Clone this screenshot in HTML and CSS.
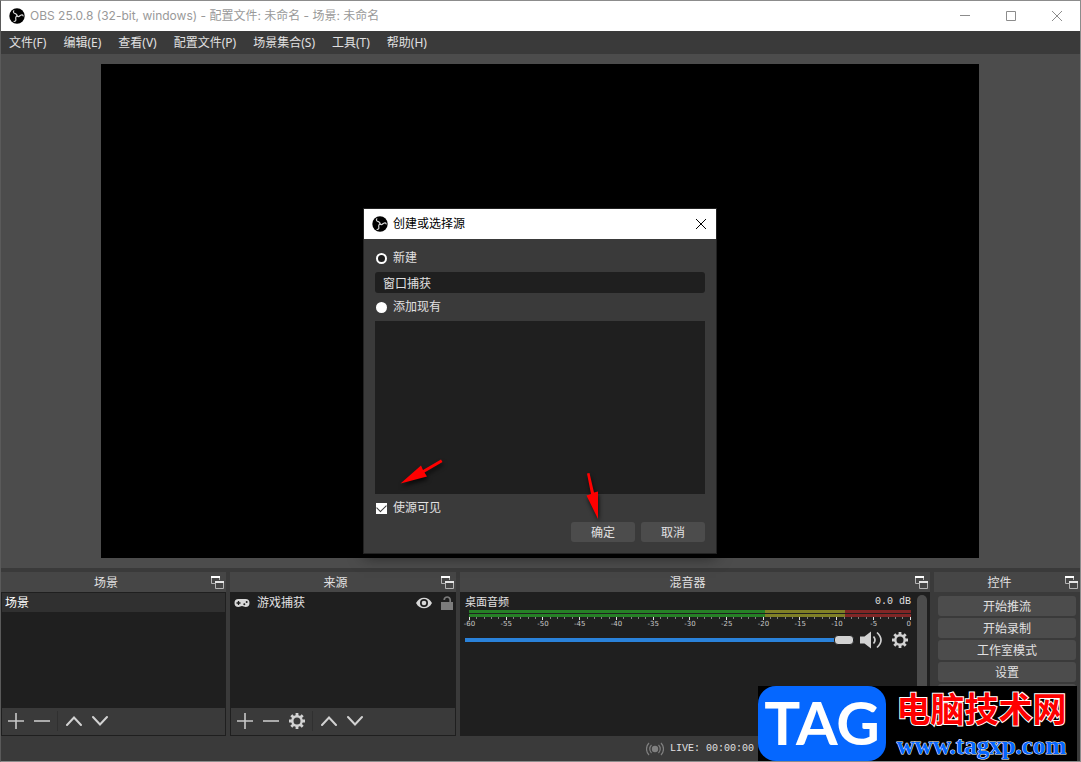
FILE: index.html
```html
<!DOCTYPE html>
<html lang="zh-CN">
<head>
<meta charset="utf-8">
<title>OBS 25.0.8</title>
<link rel="stylesheet" href="styles.css">
</head>
<body>
<svg class="defs" aria-hidden="true">
  <symbol id="logo" viewBox="0 0 16 16">
    <circle cx="8" cy="8" r="7.7" fill="#000"/>
    <g fill="none" stroke="#d6d6d6" stroke-width="1.2" stroke-linecap="round">
      <path d="M8 8C8.300 5.600 6.800 5.900 5.400 5.200C4.200 4.500 4.200 3.500 4.800 2.800"/>
      <path d="M8 8C8.300 5.600 6.800 5.900 5.400 5.200C4.200 4.500 4.200 3.500 4.800 2.800" transform="rotate(120 8 8)"/>
      <path d="M8 8C8.300 5.600 6.800 5.900 5.400 5.200C4.200 4.500 4.200 3.500 4.800 2.800" transform="rotate(240 8 8)"/>
    </g>
  </symbol>
  <symbol id="popout" viewBox="0 0 13 13">
    <path d="M.5 1v6.500h4M8.500 4V1" fill="none" stroke="#b4b4b4"/>
    <path d="M0 0h9v2H0z" fill="#fff"/>
    <path d="M4.500 6v6.500h8V6" fill="#464646" stroke="#b4b4b4"/>
    <path d="M4 5h9v2H4z" fill="#e6e6e6"/>
  </symbol>
  <symbol id="plus" viewBox="0 0 16 16"><path d="M8 0v16M0 8h16" stroke="#c8c8c8" stroke-width="1.600"/></symbol>
  <symbol id="minus" viewBox="0 0 16 16"><path d="M0 8h16" stroke="#c8c8c8" stroke-width="1.600"/></symbol>
  <symbol id="up" viewBox="0 0 16 16"><path d="M1 12l7-7.500 7 7.500" fill="none" stroke="#d2d2d2" stroke-width="2" stroke-linecap="round"/></symbol>
  <symbol id="down" viewBox="0 0 16 16"><path d="M1 4l7 7.500L15 4" fill="none" stroke="#d2d2d2" stroke-width="2" stroke-linecap="round"/></symbol>
  <symbol id="gear" viewBox="0 0 16 16">
    <circle cx="8" cy="8" r="4.700" fill="none" stroke="#d2d2d2" stroke-width="2.400"/>
    <g stroke="#d2d2d2" stroke-width="2.800">
      <path d="M8 0v3M8 13v3M0 8h3M13 8h3M2.300 2.300l2.200 2.200M11.500 11.500l2.200 2.200M2.300 13.700l2.200-2.200M11.500 4.500l2.200-2.200"/>
    </g>
  </symbol>
</svg>

<div class="window">
  <header class="titlebar">
    <svg class="logo"><use href="#logo"/></svg>
    <h1 class="titlebar-text">OBS 25.0.8 (32-bit, windows) - 配置文件: 未命名 - 场景: 未命名</h1>
    <button class="caption" aria-label="最小化"><svg viewBox="0 0 12 12"><path d="M1 5.500h10"/></svg></button>
    <button class="caption" aria-label="最大化"><svg viewBox="0 0 12 12"><path d="M1.500 1.500h9v9h-9z"/></svg></button>
    <button class="caption" aria-label="关闭"><svg viewBox="0 0 12 12"><path d="M1 1l10 10M11 1L1 11"/></svg></button>
  </header>

  <nav class="menubar">
    <button>文件(F)</button>
    <button>编辑(E)</button>
    <button>查看(V)</button>
    <button>配置文件(P)</button>
    <button>场景集合(S)</button>
    <button>工具(T)</button>
    <button>帮助(H)</button>
  </nav>

  <main class="preview"><div class="canvas"></div></main>

  <div class="docks">
    <section class="dock">
      <header class="dock-head"><h2>场景</h2><button aria-label="弹出场景"><svg><use href="#popout"/></svg></button></header>
      <div class="dock-body">
        <ul class="list"><li class="scene">场景</li></ul>
        <div class="tools">
          <button aria-label="添加场景"><svg><use href="#plus"/></svg></button>
          <button aria-label="移除场景"><svg><use href="#minus"/></svg></button>
          <span class="divider"></span>
          <button aria-label="上移场景"><svg><use href="#up"/></svg></button>
          <button aria-label="下移场景"><svg><use href="#down"/></svg></button>
        </div>
      </div>
    </section>

    <section class="dock">
      <header class="dock-head"><h2>来源</h2><button aria-label="弹出来源"><svg><use href="#popout"/></svg></button></header>
      <div class="dock-body">
        <ul class="list">
          <li class="source">
            <svg class="pad" viewBox="0 0 16 10"><path d="M4.500 1h7a4 4 0 0 1 0 8c-1.400 0-2-1-3.500-1S5.900 9 4.500 9a4 4 0 0 1 0-8z" fill="#d8d8d8"/><path d="M4.500 3v4M2.500 5h4" stroke="#1f1f1f" stroke-width="1.300"/><circle cx="10.300" cy="6.200" r="1" fill="#1f1f1f"/><circle cx="12.700" cy="4" r="1" fill="#1f1f1f"/></svg>
            <span class="source-name">游戏捕获</span>
            <button aria-label="可见"><svg class="eye" viewBox="0 0 16 12"><path d="M0 6c2-3.700 4.800-5.300 8-5.300S14 2.300 16 6c-2 3.700-4.800 5.300-8 5.300S2 9.700 0 6z" fill="#d8d8d8"/><circle cx="8" cy="6" r="4" fill="#1f1f1f"/><circle cx="8" cy="6" r="2.300" fill="#d8d8d8"/></svg></button>
            <button aria-label="锁定"><svg class="lock" viewBox="0 0 12 14"><path d="M0 6h12v8H0z" fill="#7c7c7c"/><path d="M9.200 6.500V4a3 3 0 0 0-6 0" fill="none" stroke="#7c7c7c" stroke-width="1.700"/></svg></button>
          </li>
        </ul>
        <div class="tools">
          <button aria-label="添加来源"><svg><use href="#plus"/></svg></button>
          <button aria-label="移除来源"><svg><use href="#minus"/></svg></button>
          <button aria-label="来源属性"><svg><use href="#gear"/></svg></button>
          <span class="divider"></span>
          <button aria-label="上移来源"><svg><use href="#up"/></svg></button>
          <button aria-label="下移来源"><svg><use href="#down"/></svg></button>
        </div>
      </div>
    </section>

    <section class="dock">
      <header class="dock-head"><h2>混音器</h2><button aria-label="弹出混音器"><svg><use href="#popout"/></svg></button></header>
      <div class="mixer">
        <div class="channel">
          <div class="channel-head"><label for="volume">桌面音频</label><output class="mono" for="volume">0.0 dB</output></div>
          <div class="meter">
            <div class="bar"></div>
            <div class="bar"></div>
            <div class="ticks"></div>
            <div class="scale"></div>
          </div>
          <div class="channel-foot">
            <input id="volume" class="volume" type="range" min="0" max="100" value="100">
            <button aria-label="静音"><svg class="speaker" viewBox="0 0 22 18"><path d="M0 5.500h4.500L11 .5v17l-6.500-5H0z" fill="#d2d2d2"/><path d="M13.500 5.500q3 3.500 0 7M17 1.500q8 7.500 0 15" fill="none" stroke="#d2d2d2" stroke-width="1.700"/></svg></button>
            <button aria-label="音频设置"><svg class="gear"><use href="#gear"/></svg></button>
          </div>
        </div>
        <div class="scrollbar"></div>
      </div>
    </section>

    <section class="dock">
      <header class="dock-head"><h2>控件</h2><button aria-label="弹出控件"><svg><use href="#popout"/></svg></button></header>
      <div class="controls">
        <button class="btn">开始推流</button>
        <button class="btn">开始录制</button>
        <button class="btn">工作室模式</button>
        <button class="btn">设置</button>
        <button class="btn" aria-label="退出"></button>
      </div>
    </section>
  </div>

  <footer class="status">
    <svg class="live" viewBox="0 0 18 14"><circle cx="9" cy="7" r="3.200"/><path d="M5.500 3a5.500 5.500 0 0 0 0 8M12.500 3a5.500 5.500 0 0 1 0 8M3 1a8.500 8.500 0 0 0 0 12M15 1a8.500 8.500 0 0 1 0 12"/></svg>
    <span class="mono">LIVE: 00:00:00</span>
  </footer>

  <form class="dialog" role="dialog" aria-labelledby="dialog-title">
    <header class="dialog-head">
      <svg class="logo"><use href="#logo"/></svg>
      <h2 id="dialog-title">创建或选择源</h2>
      <button type="button" class="dialog-close" aria-label="关闭"><svg viewBox="0 0 12 12"><path d="M1 1l10 10M11 1L1 11"/></svg></button>
    </header>
    <div class="dialog-body">
      <label class="option"><input type="radio" name="mode" checked>新建</label>
      <input class="name" type="text" value="窗口捕获" aria-label="名称">
      <label class="option"><input type="radio" name="mode">添加现有</label>
      <div class="existing"></div>
      <label class="option"><input type="checkbox" checked>使源可见</label>
      <div class="actions">
        <button type="button" class="btn">确定</button>
        <button type="button" class="btn">取消</button>
      </div>
    </div>
    <svg class="arrows" viewBox="0 0 352 344" aria-hidden="true">
      <path d="M77 250.500L59 261l-2-4.500L36.500 274.500l26.500-7-2.500-4L78.500 253z"/>
      <path d="M223 264.500l4 20.500-4.500 1.500 11.500 23.500V282.500l-4 1-4.500-19.500z"/>
    </svg>
  </form>

  <aside class="watermark">
    <div class="tag">TAG</div>
    <div class="site">
      <div class="site-name">电脑技术网</div>
      <div class="site-url">www.tagxp.com</div>
    </div>
  </aside>
</div>
<script src="meter.js"></script>
</body>
</html>
```
FILE: styles.css
```css
* { box-sizing: border-box; }

body {
  margin: 0;
  font: 12px/20px "Noto Sans", "Noto Sans CJK SC", sans-serif;
  color: #e1e0e1;
  background: #3a3a3a;
}

h1, h2 { margin: 0; font-size: 12px; font-weight: 400; }
ul { margin: 0; padding: 0; list-style: none; }
svg { display: block; }
input { margin: 0; font: inherit; }

button {
  display: flex;
  align-items: center;
  justify-content: center;
  margin: 0;
  padding: 0;
  border: 0;
  background: none;
  color: inherit;
  font: inherit;
}

.defs { position: absolute; width: 0; height: 0; }
.mono { font: 10px/20px "Liberation Mono", monospace; white-space: pre; }
.logo { width: 16px; height: 16px; }

.window {
  position: relative;
  display: flex;
  flex-direction: column;
  min-height: 100vh;
  border: 1px solid #8c8c8c;
  border-left-color: #5a5a5a;
  overflow: hidden;
}

/* Title bar and menu */
.titlebar {
  display: flex;
  align-items: center;
  height: 30px;
  padding-left: 8px;
  background: #fff;
  color: #999;
}
.titlebar-text { flex: 1; padding-left: 5px; font-family: "Inter", "Noto Sans CJK SC", sans-serif; }
.caption { width: 46px; height: 30px; }
.caption svg { width: 12px; height: 12px; fill: none; stroke: #8c8c8c; }

.menubar { display: flex; gap: 1px; height: 23px; }
.menubar button { padding: 0 8px; }

/* Preview */
.preview {
  display: flex;
  flex: 1;
  padding: 10px 101px 10px 100px;
  background: #4c4c4c;
}
.canvas { flex: 1; background: #000; }

/* Docks */
.docks {
  display: grid;
  grid-template-columns: 225fr 226fr 470fr 146fr;
  gap: 4px;
  height: 168px;
  padding-top: 4px;
}
.dock { display: flex; flex-direction: column; min-width: 0; min-height: 0; }
.dock-head { display: flex; align-items: center; height: 20px; padding-right: 2px; background: #464646; }
.dock-head h2 { flex: 1; padding-top: 2px; text-align: center; }
.dock-head svg { width: 13px; height: 13px; }
.dock-body { display: flex; flex: 1; flex-direction: column; border: 1px solid #1f1f1f; }
.list { flex: 1; background: #1f1f1f; }
.scene { height: 19px; padding-left: 3px; line-height: 19px; background: #303030; color: #fff; }
.source { display: flex; align-items: center; height: 20px; padding: 0 2px 0 3px; }
.source-name { flex: 1; padding-left: 7px; }
.pad { width: 16px; height: 10px; }
.eye { width: 16px; height: 12px; }
.lock { width: 12px; height: 14px; margin-left: 9px; }

.tools { display: flex; align-items: center; height: 27px; padding: 0 0 1px 1px; }
.tools button { width: 26px; height: 24px; }
.tools svg { width: 16px; height: 16px; }
.divider { width: 1px; height: 20px; margin: 0 3px 0 2px; background: #303030; }

/* Mixer */
.mixer { display: flex; flex: 1; gap: 6px; padding: 0 3px 0 5px; background: #1f1f1f; }
.channel { flex: 1; }
.channel-head { display: flex; justify-content: space-between; height: 18px; font-size: 11px; }
.meter { padding-left: 4px; }
.bar {
  height: 3px;
  margin-bottom: 1px;
  background: linear-gradient(90deg, #267f26 67%, #7f7f26 67% 85%, #7f2626 85%);
}
.ticks { display: flex; justify-content: space-between; height: 3px; margin-top: -1px; }
.ticks i { width: 1px; height: 2px; background: #808080; }
.ticks i.major { height: 3px; background: #e1e0e1; }
.scale { display: flex; justify-content: space-between; height: 9px; font: 7px/8px "DejaVu Sans", sans-serif; color: #c8c8c8; }
.scale span { display: flex; justify-content: center; width: 1px; }
.scale span:last-child { justify-content: flex-end; }
.channel-foot { display: flex; align-items: center; height: 22px; }
.speaker { width: 22px; height: 18px; margin-left: 6px; }
.gear { width: 16px; height: 16px; margin: 0 3px 0 10px; }
.scrollbar { width: 10px; margin-top: 3px; border-radius: 5px 5px 0 0; background: #4c4c4c; }

.volume {
  flex: 1;
  min-width: 0;
  height: 10px;
  appearance: none;
  border-radius: 2px;
  background: linear-gradient(#2a82da, #2a82da) center / 100% 4px no-repeat;
}
.volume::-webkit-slider-thumb {
  appearance: none;
  width: 20px;
  height: 10px;
  border: 1px solid #1f1f1f;
  border-radius: 4px;
  background: #d2d2d2;
}

/* Controls */
.btn { height: 20px; padding-top: 2px; border-radius: 3px; background: #4c4c4c; }
.controls { display: flex; flex-direction: column; gap: 2px; padding: 4px; }

/* Status bar */
.status { display: flex; align-items: center; justify-content: flex-end; gap: 6px; height: 25px; padding-right: 326px; }
.live { width: 18px; height: 14px; fill: #808080; }
.live path { fill: none; stroke: #808080; stroke-width: 1.2px; }

/* Source dialog */
.dialog {
  position: absolute;
  inset: 0 1px 0 0;
  width: 352px;
  height: fit-content;
  margin: auto;
  background: #3a3a3a;
  box-shadow: 0 0 0 1px #222, 0 4px 14px rgba(0, 0, 0, .5);
}
.dialog-head { display: flex; align-items: center; height: 30px; padding-left: 8px; background: #fff; color: #000; }
.dialog-head h2 { flex: 1; padding-left: 5px; }
.dialog-close { width: 30px; height: 30px; }
.dialog-close svg { width: 12px; height: 12px; fill: none; stroke: #000; }
.dialog-body { display: grid; gap: 4px; padding: 9px 11px 11px; }
.option { display: flex; align-items: center; gap: 6px; height: 20px; padding-left: 1px; }
.option input { width: 11px; height: 11px; appearance: none; background: #fff; }
.option input[type="radio"] { border-radius: 50%; }
.option input[type="radio"]:checked { border: 2px solid #fff; background: #1f1f1f; }
.option input[type="checkbox"] { display: grid; place-items: center; }
.option input[type="checkbox"]::before {
  content: "";
  width: 8px;
  height: 5px;
  margin-bottom: 2px;
  border: solid #3a3a3a;
  border-width: 0 0 1px 1px;
  transform: rotate(-45deg);
}
.name { width: 100%; height: 21px; padding: 0 8px; border: 0; border-radius: 3px; background: #1f1f1f; color: inherit; }
.existing { height: 173px; background: #1f1f1f; }
.actions { display: flex; justify-content: flex-end; gap: 6px; }
.actions .btn { width: 64px; }
.arrows { position: absolute; inset: 0; pointer-events: none; fill: #f00; filter: drop-shadow(1px 3px 2px rgba(0, 0, 0, .7)); }

/* Watermark */
.watermark {
  position: absolute;
  right: 3px;
  bottom: 0;
  display: flex;
  width: 319px;
  height: 75px;
  background: #000;
}
.tag {
  width: 128px;
  border-radius: 18px;
  background: #0567ff;
  color: #fff;
  font: 700 60px/72px "Lato", sans-serif;
  text-align: center;
}
.site { flex: 1; text-align: center; white-space: nowrap; paint-order: stroke fill; -webkit-text-stroke: 2px #fff; }
.site-name { height: 44px; color: #f00; font: 700 34px/44px "Noto Sans CJK SC", sans-serif; }
.site-url { color: #0567ff; font: 700 25px/31px "Liberation Serif", serif; -webkit-text-stroke-width: 1px; }
```
FILE: meter.js
```js
const ticks = document.querySelector(".ticks");
const scale = document.querySelector(".scale");

for (let db = -60; db <= 0; db++) {
  const major = db % 5 === 0;
  const tick = document.createElement("i");
  if (major) {
    tick.className = "major";
    const label = document.createElement("span");
    label.textContent = db;
    scale.append(label);
  }
  ticks.append(tick);
}
```
